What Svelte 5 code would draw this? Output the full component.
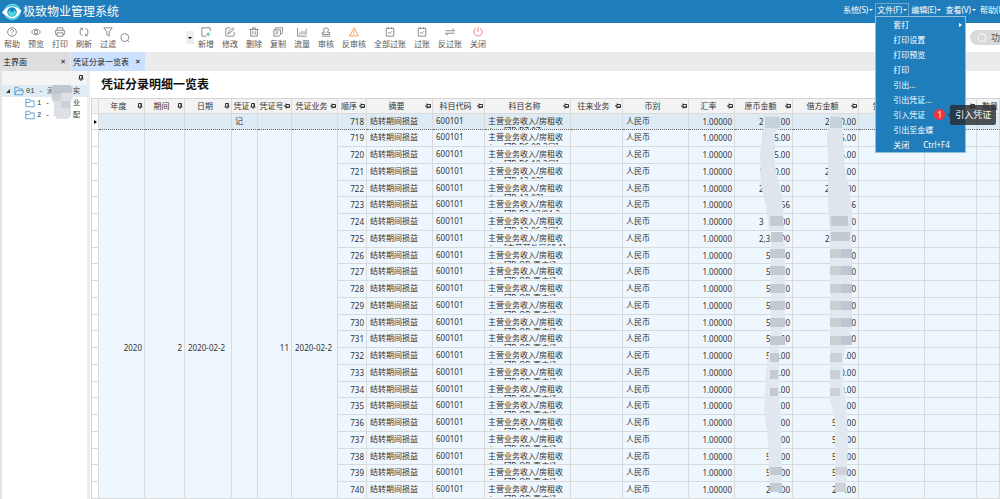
<script lang="ts">
	const menus = ['系统(S)', '文件(F)', '编辑(E)', '查看(V)', '帮助(H)'];
	const fileMenu = ['套打', '打印设置', '打印预览', '打印', '引出...', '引出凭证...', '引入凭证', '引出至金蝶', '关闭'];

	const leftTools = [
		{ label: '帮助', icon: 'help' },
		{ label: '预览', icon: 'eye' },
		{ label: '打印', icon: 'print' },
		{ label: '刷新', icon: 'refresh' },
		{ label: '过滤', icon: 'filter' },
	];
	const rightTools = [
		{ label: '新增', icon: 'add' },
		{ label: '修改', icon: 'edit' },
		{ label: '删除', icon: 'trash' },
		{ label: '复制', icon: 'copy' },
		{ label: '流量', icon: 'chart' },
		{ label: '审核', icon: 'stamp' },
		{ label: '反审核', icon: 'warn' },
		{ label: '全部过账', icon: 'check' },
		{ label: '过账', icon: 'check' },
		{ label: '反过账', icon: 'swap' },
		{ label: '关闭', icon: 'power' },
	];

	const columns = [
		{ name: '年度', width: 46, up: true },
		{ name: '期间', width: 40, up: true },
		{ name: '日期', width: 47, up: true },
		{ name: '凭证', width: 26, up: true },
		{ name: '凭证号', width: 34 },
		{ name: '凭证业务', width: 46 },
		{ name: '顺序', width: 29 },
		{ name: '摘要', width: 66 },
		{ name: '科目代码', width: 52 },
		{ name: '科目名称', width: 86 },
		{ name: '往来业务', width: 52 },
		{ name: '币别', width: 66 },
		{ name: '汇率', width: 46 },
		{ name: '原币金额', width: 58 },
		{ name: '借方金额', width: 66 },
		{ name: '贷方金额', width: 66 },
		{ name: '单价', width: 52 },
	];

	// remainder of the account name, then head and tail of the two masked amounts
	const data: [string, string, string, string, string][] = [
		['7B-B7-07', '2', '.00', '2', '0.00'],
		['7B-B6-09-3层]', '', '5.00', '', '5.00'],
		['7B-B6-10-3层]', '', '5.00', '', '5.00'],
		['7B-A3-03]', '1', '0.00', '2', '0.00'],
		['7B-A3-02]', '2', '5.00', '2', '.00'],
		['7B-B2-03/04-3', '', '66', '', '56'],
		['7B-A3-06-3层]', '3', '.00', '', '00'],
		['主营范外区68-1]', '2,3', '00', '2', '0'],
		['7B-OB-嘉广场', '5', '00', '', '00'],
		['7B-OB-嘉广场', '5', '0', '', '0'],
		['7B-OB-嘉广场', '5', '0', '', '0'],
		['7B-OB-嘉广场', '5', '0', '', '0'],
		['7B-OB-嘉广场', '56', '00', '', '0'],
		['7B-OB-嘉广场', '5', '00', '', '00'],
		['7B-OB-嘉广场', '5', '.00', '', '.00'],
		['7B-OB-嘉广场', '5', '.00', '', '0.00'],
		['7B-OB-嘉广场', '', '.00', '', '0.00'],
		['7B-OB-嘉广场', '', '.00', '', '0.00'],
		['7B-OB-嘉广场', '', '.00', '5', '.00'],
		['7B-OB-嘉广场', '', '.00', '5', '.00'],
		['7B-OB-嘉广场', '5', '.00', '5', '.00'],
		['7B-OB-嘉广场', '5', '.00', '5', '.00'],
		['7B-OB-嘉广场', '2', '.00', '2', '.00'],
	];
	const merged = ['2020', '2', '2020-02-2', '', '11', '2020-02-2'];
</script>

{#snippet icon(name: string)}
	<svg class="icon {name}" viewBox="0 0 24 24" aria-hidden="true">
		{#if name === 'help'}
			<circle cx="12" cy="12" r="10.5" />
			<path d="M8.5 9.5a3.5 3.5 0 1 1 5 3c-1 .6-1.500 1.200-1.500 2.500M12 17v1.500" />
		{:else if name === 'eye'}
			<path d="M1 12q11-14 22 0q-11 14-22 0z" />
			<circle cx="12" cy="12" r="4" />
		{:else if name === 'print'}
			<path d="M5 8V2h14v6M5 18H1.500V8h21v10H19M5 14h14v8H5z" />
		{:else if name === 'refresh'}
			<path d="M8 21A10 10 0 0 1 8 3M3 3h5v5M16 3a10 10 0 0 1 0 18M21 21h-5v-5" />
		{:else if name === 'filter'}
			<path d="M2 2h20l-7 9v11l-6-4v-7z" />
		{:else if name === 'search'}
			<circle cx="11.500" cy="11" r="9.500" />
			<path d="M18 18l4 4" />
		{:else if name === 'add'}
			<path d="M12 22H2V2h20v8" />
			<path class="green" d="M17 12v11M11.500 17.500h11" />
		{:else if name === 'edit'}
			<path d="M12 2H4a2 2 0 0 0-2 2v16a2 2 0 0 0 2 2h16a2 2 0 0 0 2-2v-8M7 17l2-6L19 2l3 3-10 9z" />
		{:else if name === 'trash'}
			<path d="M1 6h22M8 6V2h8v4M4 6v16h16V6M9 10v8M15 10v8" />
		{:else if name === 'copy'}
			<path d="M6 7V2h17v12l-3 3h-2M2 7h16v11l-4 4H2zM6 12h8M6 16h5" />
		{:else if name === 'chart'}
			<path d="M1.500 2v20H23M7 18v-5M12 18V9M17 18v-8M22 18V4" />
		{:else if name === 'stamp'}
			<path d="M9 13c0-2-3-3-3-6a6 5 0 0 1 12 0c0 3-3 4-3 6h6v5H3v-5zM2 22h20" />
		{:else if name === 'warn'}
			<path d="M12 2L1.500 21.500h21zM12 9v6M12 17v2" />
		{:else if name === 'check'}
			<path d="M3 3h18v19H3zM8 1v4M16 1v4M7 12l4 4 6-6" />
		{:else if name === 'swap'}
			<path d="M1 9h22l-6-5M23 15H1l6 5" />
		{:else if name === 'power'}
			<path d="M12 1v11M7 3a10 10 0 1 0 10 0" />
		{:else if name === 'open-folder'}
			<path d="M2 21V3h8l2 4h8v4M2 21L6 11h17l-3 10z" />
		{:else if name === 'folder'}
			<path d="M2 21V3h9l2 4h9v14zM13 7l-2 4H2" />
		{/if}
	</svg>
{/snippet}

{#snippet pin(up = false)}
	<svg class="pin" class:up viewBox="0 0 12 12" aria-hidden="true">
		<path d="M0 6h4M4 1v10M4 3h7v6H4M4 8h7" />
	</svg>
{/snippet}

{#snippet tool(label: string, name: string)}
	<button class="tool">
		{@render icon(name)}
		<span>{label}</span>
	</button>
{/snippet}

<div class="app">
	<header>
		<svg class="logo" viewBox="0 0 40 36" aria-hidden="true">
			<circle cx="21" cy="18" r="17" fill="#36b8de" />
			<path d="M0 19Q16-4 39 15Q26 44 0 19z" fill="#fff" />
			<circle cx="20" cy="18" r="9.500" fill="#1686c6" />
			<path d="M12 18a8 8 0 0 0 16 1l-3-6-2 5h-5l-2-4z" fill="#4fd5df" />
			<path d="M5 12Q18-5 35 9M7 27q14 12 27-3" fill="none" stroke="#6edce9" stroke-width="2" />
		</svg>
		<span class="brand">极致物业管理系统</span>
		<nav>
			{#each menus as menu, i}
				<div class="menu">
					<button class:open={i === 1}>{menu}<i></i></button>
					{#if i === 1}
						<div class="dropdown" role="menu">
							{#each fileMenu as item}
								<button role="menuitem">
									<span>{item}</span>
									{#if item === '套打'}<i class="more"></i>{/if}
									{#if item === '引入凭证'}<b class="badge">1</b>{/if}
									{#if item === '关闭'}<kbd>Ctrl+F4</kbd>{/if}
								</button>
							{/each}
							<div class="tooltip" role="tooltip">引入凭证</div>
						</div>
					{/if}
				</div>
			{/each}
		</nav>
	</header>

	<div class="toolbar">
		<div class="tools">
			{#each leftTools as t}{@render tool(t.label, t.icon)}{/each}
		</div>
		<button class="lookup" aria-label="查找">{@render icon('search')}</button>
		<button class="drop" aria-label="更多"><i></i></button>
		<div class="tools">
			{#each rightTools as t}{@render tool(t.label, t.icon)}{/each}
		</div>
		<button class="function-search">{@render icon('search')}功能</button>
	</div>

	<div class="tabs">
		<div class="tab"><button>主界面</button><button class="x" aria-label="关闭主界面">✕</button></div>
		<div class="tab active"><button>凭证分录一览表</button><button class="x" aria-label="关闭凭证分录一览表">✕</button></div>
	</div>

	<div class="body">
		<aside>
			<div class="pin-row">{@render pin(true)}</div>
			<ul>
				<li class="root"><i class="twist"></i>{@render icon('open-folder')}<span>01 - 深</span><span class="end">实</span></li>
				<li>{@render icon('folder')}<span>1 - 深</span><span class="end">业</span></li>
				<li>{@render icon('folder')}<span>2 - 中</span><span class="end">配</span></li>
			</ul>
			<svg class="smudge" viewBox="0 0 24 36" aria-hidden="true">
				<path d="M3 1h17l3 3v10l-2 3v15l-3 3H8l-4-4V20l-3-6V4z" fill="#dde0e4" />
				<path d="M3 1h8v9H1V4zM11 1h9l2 3v5H11z" fill="#c0c7cd" />
				<path d="M2 10h9v7H3zM11 17h9v7h-9z" fill="#ccd1d6" />
			</svg>
		</aside>

		<main>
			<h1>凭证分录明细一览表</h1>
			<div class="grid">
				<table>
					<colgroup>
						<col style="width: 7px" />
						{#each columns as c}<col style="width: {c.width}px" />{/each}
						<col />
					</colgroup>
					<thead>
						<tr>
							<th></th>
							{#each columns as c}
								<th><div class="head"><span>{c.name}</span>{@render pin(c.up)}</div></th>
							{/each}
							<th><div class="head last">数量</div></th>
						</tr>
					</thead>
					<tbody>
						{#each data as [rest, amount, amountEnd, debit, debitEnd], i}
							<tr class:current={i === 0}>
								<td class="gutter">{#if i === 0}<i class="more"></i>{/if}</td>
								{#if i === 0}
									<td></td><td></td><td></td><td class="top">记</td><td></td><td></td>
								{:else if i === 1}
									{#each merged as value}
										<td class="merged" class:num={!value.includes('-')} rowspan={data.length - 1}>{value}</td>
									{/each}
								{/if}
								<td class="num">{718 + i}</td>
								<td class="top">结转期间损益</td>
								<td class="top">600101</td>
								<td class="top"><div class="name">主营业务收入/房租收<br />入、[{rest}</div></td>
								<td></td>
								<td class="top">人民币</td>
								<td class="num">1.00000</td>
								<td><div class="amount" class:wide={i < 8}><span>{amount}</span><span>{amountEnd}</span></div></td>
								<td><div class="amount" class:wide={i < 8}><span>{debit}</span><span>{debitEnd}</span></div></td>
								<td></td>
								<td></td>
								<td></td>
							</tr>
						{/each}
					</tbody>
				</table>
				<svg class="masks" viewBox="760 114 96 384" aria-hidden="true">
					<g fill="#dfe5ed">
						<path d="M766 115h12l3 5-1 9-5 3v34l5 20 3 20 1 24h-15l-3-24-5-20-1-32 3-25V118z" />
						<path d="M832 115h8l3 5v20l2 30 5 20 2 25v25h-22l-2-40v-40l-1-25 2-10V118z" />
						<path d="M771 240h14v80l-3 10-3 20v40l2 30 1 60-4 12h-7l-2-12-1-40-4-30 2-40 5-30z" fill="#e2e8f0" />
						<path d="M830 240h22v90l-4 10-5 20v20l3 20 2 40-1 40-5 12h-5l-2-12v-60l-5-20z" fill="#e2e8f0" />
					</g>
					<g fill="#c4cad1">
						<path d="M765 117h15v11h-15zM830 117h12v11h-12z" fill="#c5d2dc" />
						<path d="M770 216h13v10h-13zM771 232h12v10h-12zM831 216h17v10h-17zM831 232h19v9h-19z" />
						{#each [249, 266, 284, 301, 318, 336] as y}
							<rect x="770" {y} width="15" height="9" />
							<rect x="830" {y} width="11" height="9" fill="#c8d0d3" />
							<rect x="841" {y} width="11" height="9" fill="#c0c6d1" />
						{/each}
						<path d="M770 353h9v9h-9zM770 370h8v9h-8zM770 388h8v8h-8zM770 467h12v8h-12zM770 483h12v9h-12z" />
						<path d="M830 353h12v9h-12zM830 370h10v9h-10zM830 388h10v8h-10zM835 467h12v8h-12zM835 483h11v9h-11z" fill="#ccd1d9" />
					</g>
				</svg>
			</div>
		</main>
	</div>
</div>

<style>
	:global(body) {
		margin: 0;
		overflow: hidden;
	}

	.app {
		height: 100vh;
		display: flex;
		flex-direction: column;
		overflow: hidden;
		background: #fff;
		color: #333;
		font: 8px/10px 'Noto Sans', 'Noto Sans CJK SC', sans-serif;
	}

	button {
		padding: 0;
		border: 0;
		background: none;
		color: inherit;
		font: inherit;
		white-space: nowrap;
	}

	svg {
		display: block;
		flex: none;
		fill: none;
		stroke: currentColor;
	}

	header {
		display: flex;
		align-items: center;
		height: 23px;
		flex: none;
		background: #1f7dbb;
		color: #fff;
	}

	.logo {
		width: 20px;
		height: 20px;
		margin: 0 1px 0 2px;
		stroke: none;
	}

	.brand {
		font-size: 12px;
		line-height: 20px;
	}

	nav {
		display: flex;
		width: 159px;
		margin-left: auto;
		align-self: flex-start;
		padding-top: 3px;
	}

	.menu {
		position: relative;
		flex: none;
	}

	.menu > button {
		display: flex;
		align-items: center;
		gap: 1px;
		height: 13px;
		padding: 0 1px;
		border: 1px solid transparent;
		border-bottom: 0;
	}

	.menu > button.open {
		border-color: #6ba6cc;
	}

	.menu > button i,
	.drop i {
		border: 2px solid transparent;
		border-top-color: currentColor;
		border-bottom: 0;
	}

	.dropdown {
		position: absolute;
		top: 13px;
		left: 0;
		z-index: 5;
		width: 89px;
		border: 1px solid #8fbfe0;
		background: #1f7dbb;
	}

	.dropdown button {
		display: flex;
		align-items: center;
		width: 100%;
		height: 15px;
		padding-left: 17px;
	}

	.more {
		border: 2px solid transparent;
		border-left: 3px solid currentColor;
		border-right: 0;
	}

	.dropdown .more {
		margin: 0 3px 0 auto;
	}

	.badge {
		width: 11px;
		height: 11px;
		margin-left: 9px;
		border-radius: 50%;
		background: #f5333c;
		line-height: 11px;
		font-weight: 400;
	}

	kbd {
		margin-left: 14px;
		font: inherit;
	}

	.tooltip {
		position: absolute;
		top: 88px;
		left: 74px;
		padding: 0 5px;
		border-radius: 2px;
		background: rgba(40, 44, 48, 0.82);
		font-size: 9px;
		line-height: 20px;
		white-space: nowrap;
	}

	.tooltip::before {
		content: '';
		position: absolute;
		top: 8px;
		left: -3px;
		border: 2px solid transparent;
		border-right: 3px solid #2b4e65;
		border-left: 0;
	}

	.toolbar {
		display: flex;
		align-items: center;
		height: 29px;
		flex: none;
		padding-left: 4px;
		color: #555;
	}

	.tools {
		display: flex;
		gap: 8px;
	}

	.tool {
		display: flex;
		flex-direction: column;
		align-items: center;
		gap: 2px;
	}

	.icon {
		width: 10px;
		height: 10px;
		stroke-width: 2;
		color: #777;
	}

	.tool .green {
		stroke: #38c172;
	}

	.icon.warn {
		color: #f58a3c;
	}

	.icon.power {
		color: #f06a6a;
	}

	.lookup {
		margin: 0 56px 0 4px;
	}

	.drop {
		display: flex;
		align-items: center;
		justify-content: center;
		width: 8px;
		height: 13px;
		margin-right: 4px;
		background: #eee;
		color: #000;
	}

	.function-search {
		display: flex;
		align-items: center;
		gap: 4px;
		width: 30px;
		height: 15px;
		margin-left: auto;
		padding-left: 7px;
		box-sizing: border-box;
		overflow: hidden;
		border-radius: 8px 0 0 8px;
		background: #d9d9d9;
		font-size: 9px;
	}

	.function-search .icon {
		color: #fff;
	}

	.tabs {
		display: flex;
		gap: 1px;
		height: 19px;
		flex: none;
		background: #ebebeb;
	}

	.tab {
		display: flex;
		align-items: center;
		gap: 6px;
		min-width: 63px;
		padding: 0 4px 0 3px;
		background: #dedede;
		color: #222;
	}

	.tab.active {
		padding-left: 2px;
		background: #cce1ff;
	}

	.tab .x {
		margin-left: auto;
		font: bold 7px/10px 'DejaVu Sans', sans-serif;
	}

	.body {
		display: flex;
		flex: 1;
		min-height: 0;
	}

	aside {
		position: relative;
		width: 90px;
		flex: none;
		border-left: 2px solid #e4e4e4;
		border-right: 3px solid #ececec;
		box-sizing: border-box;
	}

	.pin-row {
		display: flex;
		justify-content: flex-end;
		height: 14px;
		align-items: center;
		padding-right: 3px;
		background: #f5f5f5;
	}

	ul {
		margin: 0;
		padding: 0;
		list-style: none;
		font-family: 'Liberation Mono', 'Noto Sans CJK SC', monospace;
		font-size: 7px;
	}

	li {
		display: flex;
		align-items: center;
		gap: 2px;
		height: 12px;
		padding-left: 23px;
	}

	li.root {
		padding-left: 4px;
		background: #dfecf5;
	}

	li .icon {
		color: #4d94c8;
	}

	li .end {
		margin: 0 7px 0 auto;
	}

	.twist {
		margin-right: 2px;
		border-left: 4px solid transparent;
		border-bottom: 4px solid #333;
	}

	.smudge {
		position: absolute;
		top: 13px;
		left: 48px;
		width: 24px;
		height: 36px;
		stroke: none;
	}

	main {
		flex: 1;
		min-width: 0;
		padding-left: 1px;
	}

	h1 {
		margin: 0;
		padding: 5px 0 5px 10px;
		color: #111;
		font-size: 12px;
		line-height: 17px;
	}

	.grid {
		position: relative;
		overflow: hidden;
		border-left: 1px solid #d4d4d4;
	}

	table {
		width: 100%;
		table-layout: fixed;
		border-collapse: separate;
		border-spacing: 0;
	}

	th,
	td {
		box-sizing: border-box;
		padding: 0 2px 0 3px;
		border-right: 1px solid #d9dadc;
		border-bottom: 1px solid #d9dadc;
		overflow: hidden;
		white-space: nowrap;
	}

	th {
		height: 16px;
		padding: 0 1px;
		border-top: 1px solid #d4d4d4;
		background: #f3f3f3;
		font-weight: 400;
	}

	.head {
		display: flex;
		align-items: center;
	}

	.head span {
		flex: 1;
	}

	.head.last {
		justify-content: flex-end;
	}

	.pin {
		width: 6px;
		height: 6px;
		stroke-width: 2;
	}

	.pin.up {
		transform: rotate(-90deg);
	}

	td {
		height: 17px;
		background: #eff7fe;
	}

	tr:nth-child(4n + 1) td:not(.merged) {
		height: 16px;
	}

	td.gutter {
		padding: 0 0 0 2px;
		background: #fff;
	}

	.gutter .more {
		display: block;
		width: 0;
		color: #000;
	}

	.current td:not(.gutter) {
		border-bottom: 1px dotted #666;
		background: #deebf5;
	}

	td.top {
		padding-top: 2px;
		vertical-align: top;
	}

	td.num {
		text-align: right;
	}

	td.merged {
		padding-top: 68px;
	}

	.name {
		height: 13px;
		overflow: hidden;
	}

	.amount {
		display: flex;
		justify-content: space-between;
		width: 24px;
		margin-left: auto;
	}

	.amount.wide {
		width: 31px;
	}

	.masks {
		position: absolute;
		top: 16px;
		left: 668px;
		width: 96px;
		height: 384px;
		stroke: none;
	}
</style>
